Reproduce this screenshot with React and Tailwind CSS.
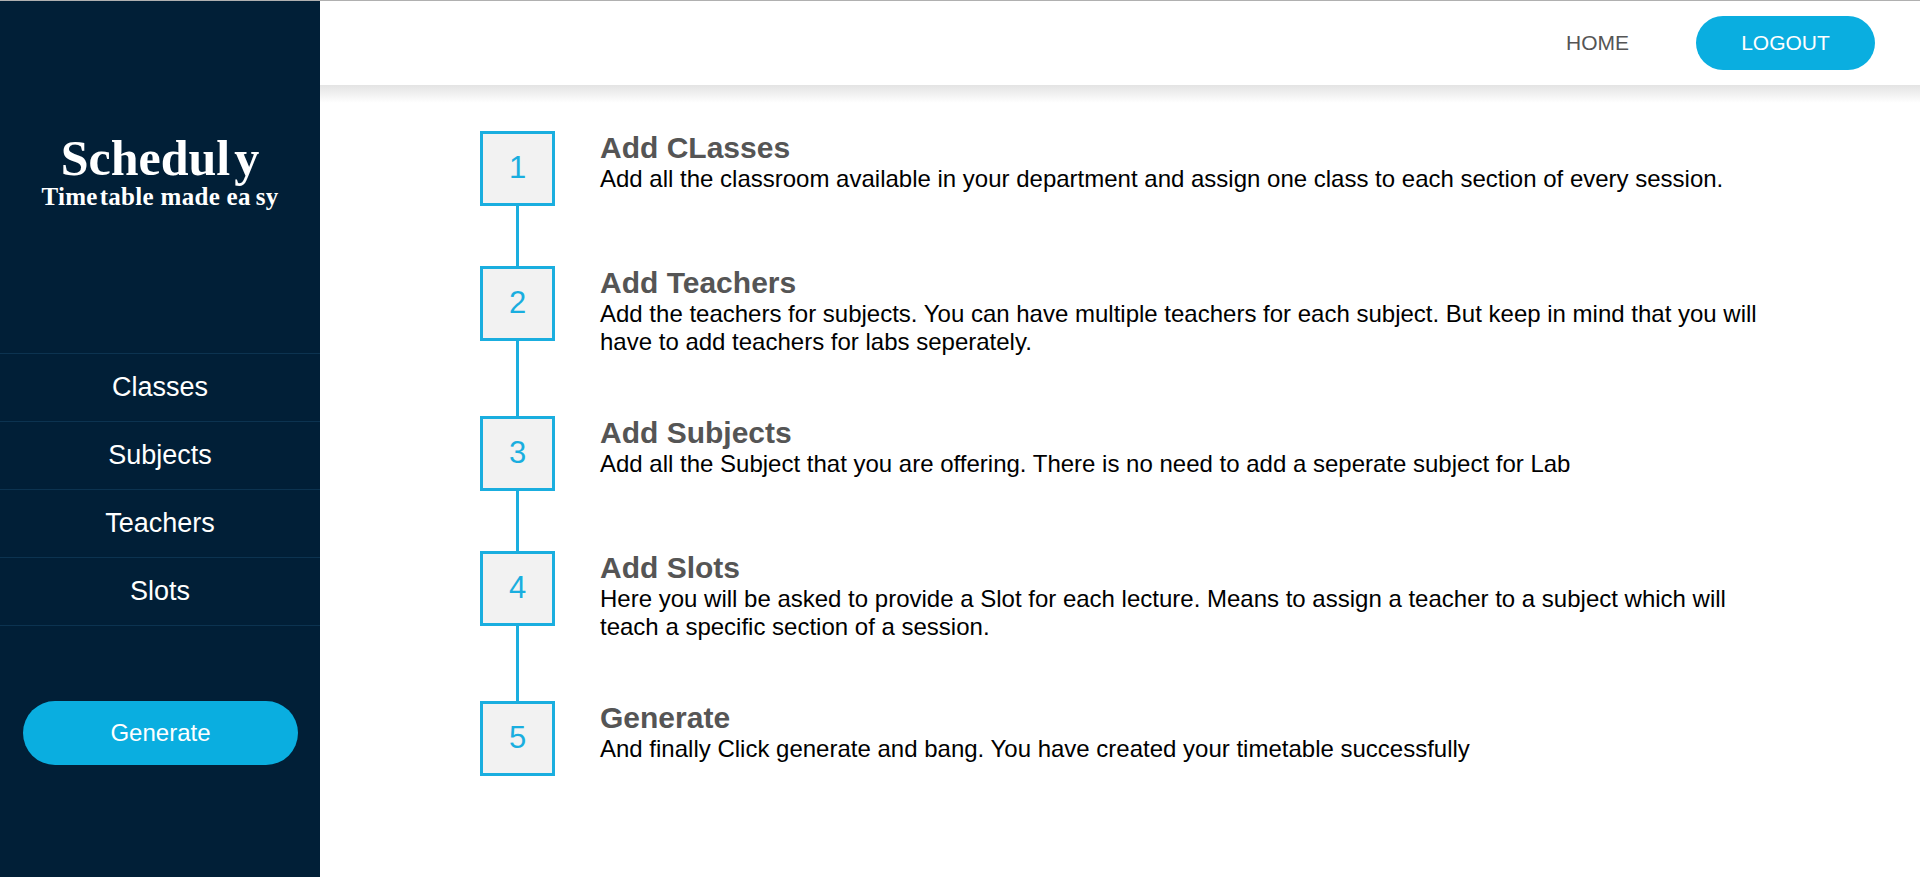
const navLinks = ["Classes", "Subjects", "Teachers", "Slots"];

const steps = [
  {
    title: "Add CLasses",
    text: "Add all the classroom available in your department and assign one class to each section of every session.",
  },
  {
    title: "Add Teachers",
    text: "Add the teachers for subjects. You can have multiple teachers for each subject. But keep in mind that you will have to add teachers for labs seperately.",
  },
  {
    title: "Add Subjects",
    text: "Add all the Subject that you are offering. There is no need to add a seperate subject for Lab",
  },
  {
    title: "Add Slots",
    text: "Here you will be asked to provide a Slot for each lecture. Means to assign a teacher to a subject which will teach a specific section of a session.",
  },
  {
    title: "Generate",
    text: "And finally Click generate and bang. You have created your timetable successfully",
  },
];

function Sidebar() {
  return (
    <aside className="w-[320px] shrink-0 bg-[#011f37] flex flex-col">
      <div className="h-[352px] pt-[128px] text-center text-white font-bold font-['Liberation_Serif',serif]">
        <h1 className="text-[50px] leading-[58px]">
          Schedul<span className="ml-[4px]">y</span>
        </h1>
        <p className="text-[25px] leading-[20px] tracking-[0.3px]">
          Time<span className="ml-[2px]">table</span> made ea<span className="ml-[5px]">sy</span>
        </p>
      </div>
      <nav className="border-t border-[#0c3350]">
        {navLinks.map((link) => (
          <a
            key={link}
            className="h-[68px] flex items-center justify-center border-b border-[#0c3350] text-white text-[27px]"
          >
            {link}
          </a>
        ))}
      </nav>
      <button className="mt-[75px] ml-[23px] w-[275px] h-[64px] rounded-[32px] bg-[#0aaee0] text-white text-[24px]">
        Generate
      </button>
    </aside>
  );
}

function Header() {
  return (
    <header className="h-[84px] shrink-0 bg-white flex items-center justify-end pr-[45px]">
      <a className="text-[21px] text-[#555555] mr-[67px]">HOME</a>
      <button className="w-[179px] h-[54px] rounded-[27px] bg-[#0aaee0] text-white text-[21px]">
        LOGOUT
      </button>
    </header>
  );
}

function Step({ index, title, text, last }) {
  return (
    <div className={`flex ${last ? "" : "pb-[60px]"} relative`}>
      <div className="w-[75px] h-[75px] shrink-0 border-[3px] border-[#1aaedf] bg-[#f2f2f2] flex items-center justify-center text-[#1aaedf] text-[31px] pb-[1px]">
        {index}
      </div>
      {!last && (
        <div className="absolute left-[36px] top-[75px] bottom-0 w-[3px] bg-[#1aaedf]"></div>
      )}
      <div className="ml-[45px] w-[1170px]">
        <h3 className="text-[30px] leading-[34px] font-bold text-[#555555]">{title}</h3>
        <p className="text-[24px] leading-[28px] text-black">{text}</p>
      </div>
    </div>
  );
}

export default function App() {
  return (
    <div className="h-[877px] flex flex-col overflow-hidden bg-white font-['Liberation_Sans',Arial,sans-serif]">
      <div className="h-px shrink-0 bg-[#b0b0b0]"></div>
      <div className="flex flex-1 min-h-0">
        <Sidebar />
        <main className="flex-1 flex flex-col min-w-0">
          <Header />
          <div className="pt-[46px] pl-[160px] bg-[linear-gradient(to_bottom,#e3e3e3,#ffffff_18px)]">
            {steps.map((step, i) => (
              <Step
                key={step.title}
                index={i + 1}
                title={step.title}
                text={step.text}
                last={i === steps.length - 1}
              />
            ))}
          </div>
        </main>
      </div>
    </div>
  );
}
